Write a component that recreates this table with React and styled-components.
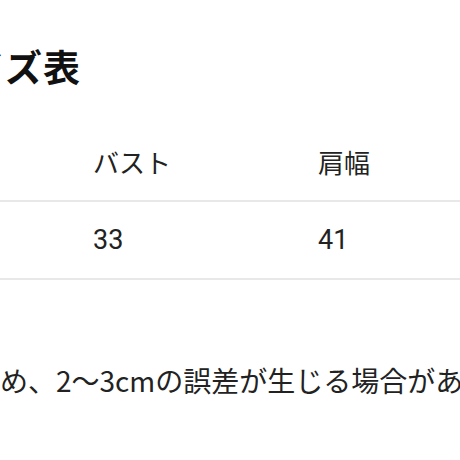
import React from "react";
import styled, {createGlobalStyle} from "styled-components";

const GlobalStyle = createGlobalStyle`
  html, body {
    margin: 0;
    padding: 0;
    background: #fff;
    overflow: hidden;
  }
  body {
    font-family: "Noto Sans CJK JP", "Noto Sans", sans-serif;
    color: #222;
  }
`

const Page = styled.div`
  width: 900px;
  margin-left: -140px;
  padding-top: 38px;
`

const Title = styled.h2`
  margin: 0 0 0 70px;
  font-size: 37px;
  font-weight: 700;
  letter-spacing: 1px;
  line-height: 56px;
  color: #111;
`

const Table = styled.table`
  margin-top: 29px;
  border-collapse: collapse;
  font-size: 26px;
`

const Cell = styled.td`
  width: 225px;
  height: 78px;
  padding: 0 0 0 8px;
  box-sizing: border-box;
  text-align: left;
  vertical-align: middle;
  font-weight: 400;
  color: #222;
  font-size: ${p => p.$num ? "27px" : "26px"};
  font-family: ${p => p.$num ? "Roboto, 'Noto Sans CJK JP', sans-serif" : "'Noto Sans CJK JP', sans-serif"};
`

const Row = styled.tr`
  border-bottom: 2px solid #e8e8e8;
`

const Note = styled.p`
  margin: 80px 0 0 28px;
  font-size: 28px;
  line-height: 40px;
  white-space: nowrap;
  color: #222;
`

const header = ["サイズ", "バスト", "肩幅", "着丈"]
const data = ["F", "33", "41", "60"]

export default function App() {
    return <>
        <GlobalStyle/>
        <Page>
            <Title>サイズ表</Title>
            <Table>
                <tbody>
                <Row>
                    {header.map((h, i) => <Cell as="th" key={`h-${i}`}>{h}</Cell>)}
                </Row>
                <Row>
                    {data.map((d, i) => <Cell $num key={`d-${i}`}>{d}</Cell>)}
                </Row>
                </tbody>
            </Table>
            <Note>測定のため、2～3cmの誤差が生じる場合があります。</Note>
        </Page>
    </>
}
